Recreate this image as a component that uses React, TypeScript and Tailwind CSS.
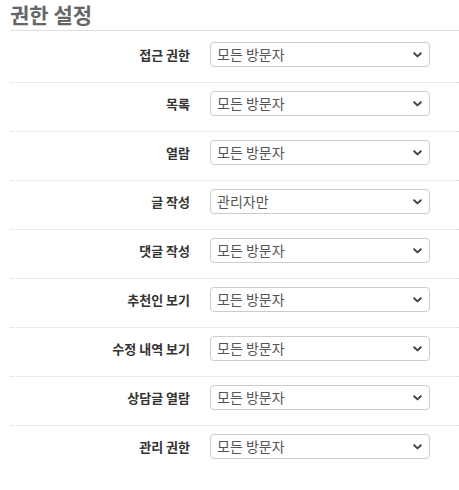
import React from 'react';

const rows: { label: string; value: string }[] = [
  { label: '접근 권한', value: '모든 방문자' },
  { label: '목록', value: '모든 방문자' },
  { label: '열람', value: '모든 방문자' },
  { label: '글 작성', value: '관리자만' },
  { label: '댓글 작성', value: '모든 방문자' },
  { label: '추천인 보기', value: '모든 방문자' },
  { label: '수정 내역 보기', value: '모든 방문자' },
  { label: '상담글 열람', value: '모든 방문자' },
  { label: '관리 권한', value: '모든 방문자' },
];

const options = ['모든 방문자', '로그인 사용자', '관리자만'];

const Chevron = () => (
  <svg className="pointer-events-none absolute right-[8px] top-1/2 -translate-y-1/2" width="9" height="6" viewBox="0 0 9 6">
    <path d="M1.2 1.2 L4.5 4.4 L7.8 1.2" fill="none" stroke="#444" strokeWidth="2" strokeLinecap="round" strokeLinejoin="round" />
  </svg>
);

export default function App() {
  return (
    <div
      className="bg-white w-[459px] h-[490px] pl-[10px] text-[#333]"
      style={{ fontFamily: '"Malgun Gothic", "Noto Sans CJK KR", "Noto Sans", sans-serif' }}
    >
      <h2 className="pt-[1px] h-[31px] border-b border-[#dddddd] text-[21px] leading-[27px] font-bold text-[#666]">권한 설정</h2>
      <div className="pt-[3px]">
        {rows.map((r, i) => (
          <div
            key={r.label}
            className={`flex items-center pt-[8px] pb-[15px] ${i < rows.length - 1 ? 'border-b border-dotted border-[#d4d4d4]' : ''}`}
          >
            <label className="w-[180px] text-right text-[13px] leading-[19px] font-bold text-[#333]">{r.label}</label>
            <div className="relative ml-[20px] w-[220px] h-[25px]">
              <select
                defaultValue={r.value}
                className="block appearance-none w-full h-[25px] rounded-[4px] border border-[#cccccc] bg-white pl-[6px] pr-6 text-[14px] leading-[23px] text-[#555] outline-none"
              >
                {options.map((o) => (
                  <option key={o} value={o}>
                    {o}
                  </option>
                ))}
              </select>
              <Chevron />
            </div>
          </div>
        ))}
      </div>
    </div>
  );
}
